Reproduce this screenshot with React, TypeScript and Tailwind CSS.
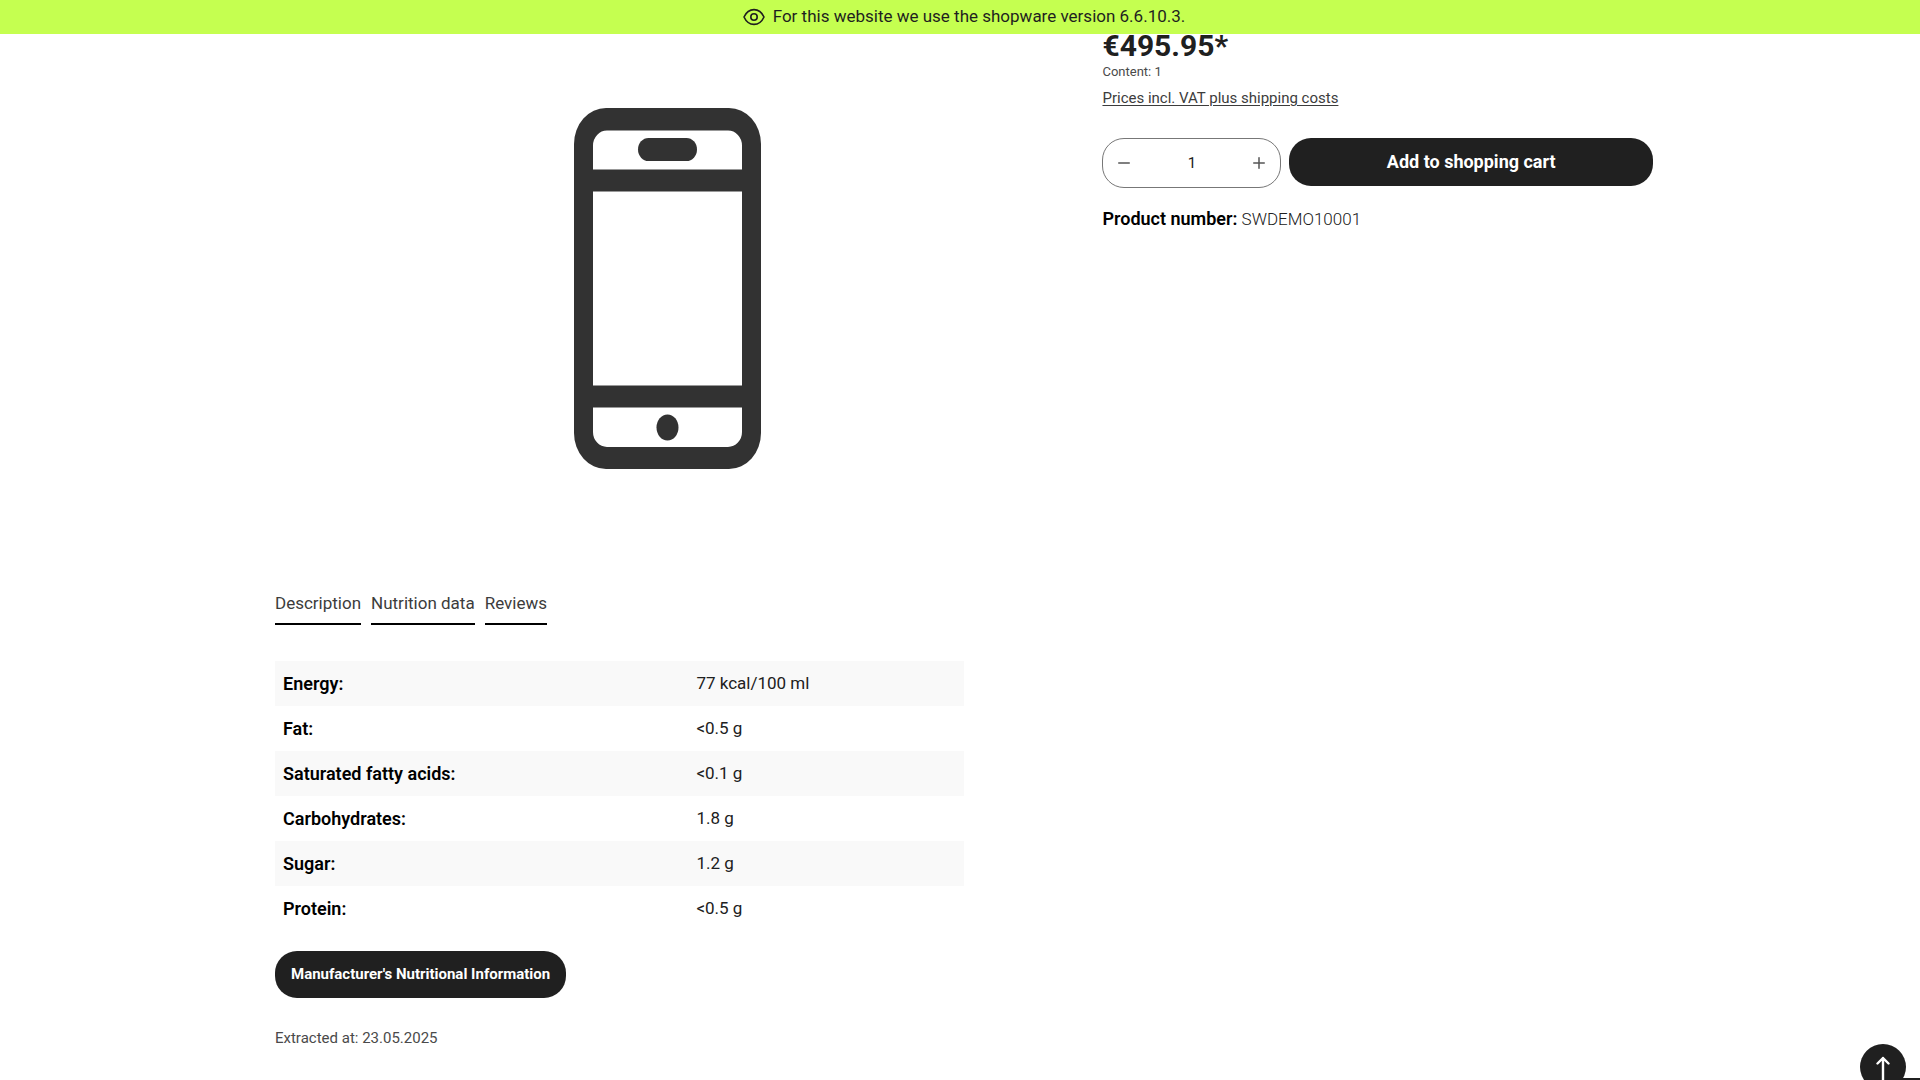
import { useState } from 'react';
import { Minus, Plus } from 'lucide-react';

const tabs = ['Description', 'Nutrition data', 'Reviews'];

const nutrition = [
  { label: 'Energy:', value: '77 kcal/100 ml' },
  { label: 'Fat:', value: '<0.5 g' },
  { label: 'Saturated fatty acids:', value: '<0.1 g' },
  { label: 'Carbohydrates:', value: '1.8 g' },
  { label: 'Sugar:', value: '1.2 g' },
  { label: 'Protein:', value: '<0.5 g' },
];

const EyeIcon = () => (
  <svg width="22" height="18" viewBox="0 0 22 18" fill="none" stroke="#1f1f1f" strokeWidth="1.6" aria-hidden="true">
    <path d="M1 9C3.2 4.2 6.8 1.6 11 1.6S18.8 4.2 21 9C18.8 13.8 15.2 16.4 11 16.4S3.2 13.8 1 9Z" strokeLinejoin="round" />
    <circle cx="11" cy="9" r="3.2" />
  </svg>
);

const ArrowIcon = () => (
  <svg width="14" height="26" viewBox="0 0 14 26" fill="none" stroke="currentColor" strokeWidth="2.4" aria-hidden="true">
    <path d="M7 26V2M1.5 7.5L7 2L12.5 7.5" strokeLinecap="round" strokeLinejoin="round" />
  </svg>
);

const PhoneImage = () => (
  <svg width="187" height="361" viewBox="0 0 187 361" role="img" aria-label="Product">
    <path
      fill="#323232"
      fillRule="evenodd"
      d="M32 0H155A32 36 0 0 1 187 36V325A32 36 0 0 1 155 361H32A32 36 0 0 1 0 325V36A32 36 0 0 1 32 0Z
        M33 22.5H154A14 15 0 0 1 168 37.5V61.5H19V37.5A14 15 0 0 1 33 22.5Z
        M19 83.5H168V277.5H19Z
        M19 299.5H168V324A14 15 0 0 1 154 339H33A14 15 0 0 1 19 324Z"
    />
    <rect x="64" y="30" width="59" height="23" rx="10.5" ry="11.5" fill="#323232" />
    <ellipse cx="93.5" cy="319.5" rx="11" ry="13" fill="#323232" />
  </svg>
);

const ProductBuy = () => {
  const [quantity, setQuantity] = useState('1');
  const step = (by: number) => setQuantity(String(Math.max(1, Number(quantity) + by)));

  return (
    <section className="flex-1 pt-7">
      <p className="text-[30px] leading-9 font-bold">€495.95*</p>
      <p className="text-[13px] leading-4 text-[#4a4a4a]">Content: 1</p>
      <a href="#shipping" className="mt-2 inline-block text-[15px] leading-5 text-[#3c3c3c] underline underline-offset-2">
        Prices incl. VAT plus shipping costs
      </a>

      <form className="mt-7 flex items-start gap-2" onSubmit={(e) => e.preventDefault()}>
        <div className="flex h-[50px] w-[179px] items-center rounded-[22px] border border-[#777] px-3">
          <button type="button" aria-label="Decrease quantity" onClick={() => step(-1)} className="text-[#555]">
            <Minus className="size-[18px]" strokeWidth={2} />
          </button>
          <input
            aria-label="Quantity"
            inputMode="numeric"
            value={quantity}
            onChange={(e) => setQuantity(e.target.value)}
            className="min-w-0 flex-1 bg-transparent text-center text-[15px]"
          />
          <button type="button" aria-label="Increase quantity" onClick={() => step(1)} className="text-[#555]">
            <Plus className="size-[18px]" strokeWidth={2} />
          </button>
        </div>
        <button type="submit" className="h-12 flex-1 rounded-[22px] bg-[#202020] text-lg font-bold text-white">
          Add to shopping cart
        </button>
      </form>

      <p className="mt-[17px] text-[17px] leading-7 font-light">
        <span className="text-lg leading-7 font-semibold text-black">Product number:</span> SWDEMO10001
      </p>
    </section>
  );
};

const NutritionData = () => (
  <section className="w-1/2">
    <nav className="flex gap-[10px]">
      {tabs.map((tab) => (
        <a key={tab} href="#tab" className="border-b-2 border-black pb-[6px] text-[17px] leading-7 text-[#3c3c3c]">
          {tab}
        </a>
      ))}
    </nav>

    <table className="mt-9 w-full text-left leading-[45px]">
      <tbody>
        {nutrition.map((row) => (
          <tr key={row.label} className="odd:bg-[#f9f9f9]">
            <th scope="row" className="w-[60%] px-2 text-[18px] font-semibold text-black">{row.label}</th>
            <td className="px-2 text-[17px]">{row.value}</td>
          </tr>
        ))}
      </tbody>
    </table>

    <a
      href="#nutrition"
      className="mt-5 inline-block rounded-[22px] bg-[#202020] px-4 text-[15px] leading-[47px] font-bold text-white"
    >
      Manufacturer's Nutritional Information
    </a>
    <p className="mt-7 text-[15px] leading-6 text-[#4a4a4a]">Extracted at: 23.05.2025</p>
  </section>
);

const App = () => (
  <div className="relative min-h-screen overflow-hidden bg-white pl-2 font-[Roboto,'Open_Sans',sans-serif] text-[#202020]">
    <header className="fixed inset-x-0 top-0 z-10 flex h-[34px] items-center justify-center gap-2 bg-[#c5ff50] pl-2 text-[17px] text-[#1f1f1f]">
      <EyeIcon />
      For this website we use the shopware version 6.6.10.3.
    </header>

    <main className="mx-auto max-w-[1378px]">
      <div className="flex gap-[42px]">
        <div className="flex w-[57%] justify-center pt-[108px]">
          <PhoneImage />
        </div>
        <ProductBuy />
      </div>
      <div className="pt-[120px]">
        <NutritionData />
      </div>
    </main>

    <button
      type="button"
      aria-label="Back to top"
      className="fixed right-[14px] -bottom-[10px] flex size-[46px] items-center justify-center rounded-full bg-[#202020] pt-1 text-white"
    >
      <ArrowIcon />
    </button>
    <div className="fixed right-0 bottom-0 h-[2px] w-5 bg-[#202020]" />
  </div>
);

export default App;
